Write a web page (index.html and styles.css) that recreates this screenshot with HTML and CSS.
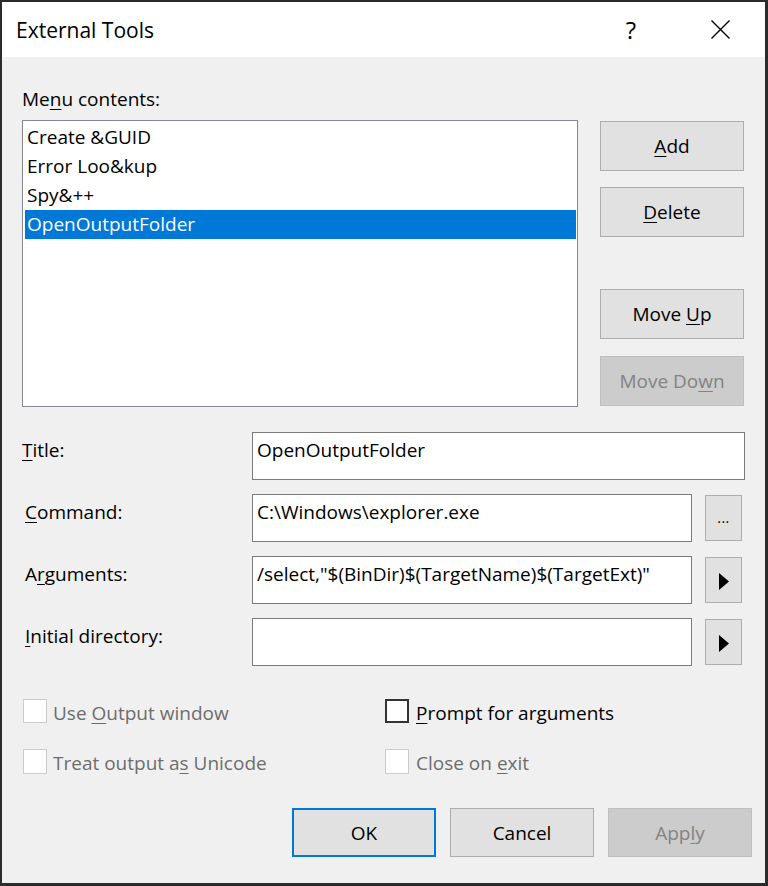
FILE: index.html
```html
<!DOCTYPE html>
<html>
<head>
<meta charset="utf-8">
<title>External Tools</title>
<link rel="stylesheet" href="styles.css">
</head>
<body>
<div class="window">
  <div class="titlebar">
    <span class="title">External Tools</span>
    <span class="tb-help">?</span>
    <span class="tb-close">
      <svg width="19" height="19" viewBox="0 0 19 19"><path d="M0.5 0.5 L18.5 18.5 M18.5 0.5 L0.5 18.5" stroke="#000" stroke-width="1.4" fill="none"/></svg>
    </span>
  </div>
  <div class="content">
    <div class="menu-label">Me<u>n</u>u contents:</div>
    <div class="top-row">
      <div class="list">
        <div class="item">Create &amp;GUID</div>
        <div class="item">Error Loo&amp;kup</div>
        <div class="item">Spy&amp;++</div>
        <div class="item selected">OpenOutputFolder</div>
      </div>
      <div class="side">
        <div class="group">
          <div class="btn"><span><u>A</u>dd</span></div>
          <div class="btn"><span><u>D</u>elete</span></div>
        </div>
        <div class="group group-lower">
          <div class="btn"><span>Move <u>U</u>p</span></div>
          <div class="btn disabled"><span>Move Do<u>w</u>n</span></div>
        </div>
      </div>
    </div>

    <div class="fields">
      <div class="frow">
        <div class="flabel"><u>T</u>itle:</div>
        <div class="tbox wide">OpenOutputFolder</div>
      </div>
      <div class="frow">
        <div class="flabel indent"><u>C</u>ommand:</div>
        <div class="tbox narrow">C:\Windows\explorer.exe</div>
        <div class="mini-btn dots">...</div>
      </div>
      <div class="frow">
        <div class="flabel indent">A<u>r</u>guments:</div>
        <div class="tbox narrow">/select,"$(BinDir)$(TargetName)$(TargetExt)"</div>
        <div class="mini-btn arrow"><svg width="10" height="17" viewBox="0 0 10 17"><polygon points="0,0 10,8.5 0,17" fill="#000"/></svg></div>
      </div>
      <div class="frow">
        <div class="flabel indent"><u>I</u>nitial directory:</div>
        <div class="tbox narrow"></div>
        <div class="mini-btn arrow"><svg width="10" height="17" viewBox="0 0 10 17"><polygon points="0,0 10,8.5 0,17" fill="#000"/></svg></div>
      </div>
    </div>

    <div class="checks">
      <div class="check disabled"><span class="cbox"></span><span class="clabel">Use <u>O</u>utput window</span></div>
      <div class="check col2"><span class="cbox on"></span><span class="clabel"><u>P</u>rompt for arguments</span></div>
      <div class="check disabled"><span class="cbox"></span><span class="clabel">Treat output a<u>s</u> Unicode</span></div>
      <div class="check disabled col2"><span class="cbox"></span><span class="clabel">Close on <u>e</u>xit</span></div>
    </div>

    <div class="footer">
      <div class="btn fbtn default"><span>OK</span></div>
      <div class="btn fbtn"><span>Cancel</span></div>
      <div class="btn fbtn disabled"><span>App<u>l</u>y</span></div>
    </div>
  </div>
</div>
</body>
</html>
```

FILE: styles.css
```css
html, body {
  margin: 0;
  padding: 0;
  background: #2b2b2b;
}
body {
  font-family: "Open Sans", "Noto Sans", sans-serif;
  font-size: 19px;
  color: #000;
}
u {
  text-decoration: underline;
  text-decoration-thickness: 1px;
  text-underline-offset: 3px;
}
.window {
  width: 768px;
  height: 886px;
  box-sizing: border-box;
  border-style: solid;
  border-color: #2b2b2b;
  border-width: 2px 3px 3px 2px;
  background: #f0f0f0;
  display: flex;
  flex-direction: column;
  overflow: hidden;
}
.titlebar {
  height: 55px;
  flex: none;
  background: #fff;
  display: flex;
  align-items: center;
}
.title {
  flex: 1;
  font-size: 21px;
  line-height: 28px;
  padding-left: 14px;
  padding-top: 1px;
}
.tb-help {
  width: 88px;
  text-align: center;
  font-size: 24px;
  line-height: 30px;
}
.tb-close {
  width: 90px;
  display: flex;
  justify-content: center;
  align-items: center;
}
.tb-close svg { display: block; }

.content {
  flex: 1;
  padding: 29px 13px 0 20px;
}
.menu-label {
  line-height: 26px;
}
.top-row {
  display: flex;
  gap: 22px;
  margin-top: 8px;
  width: 722px;
}
.list {
  width: 556px;
  height: 287px;
  box-sizing: border-box;
  border: 1px solid #828790;
  background: #fff;
  padding: 2px 1px 2px 2px;
}
.item {
  height: 29px;
  line-height: 29px;
  padding-left: 2px;
  white-space: nowrap;
}
.item.selected {
  background: #0078d7;
  color: #fff;
}
.side {
  width: 144px;
  padding-top: 1px;
  display: flex;
  flex-direction: column;
}
.group {
  display: flex;
  flex-direction: column;
  gap: 16px;
}
.group-lower {
  margin-top: 52px;
  gap: 17px;
}
.btn {
  height: 50px;
  box-sizing: border-box;
  border: 1px solid #adadad;
  background: #e1e1e1;
  display: flex;
  align-items: center;
  justify-content: center;
  line-height: 26px;
  white-space: nowrap;
}
.btn.disabled {
  background: #cccccc;
  border-color: #bfbfbf;
  color: #838383;
}

.fields {
  margin-top: 25px;
  width: 723px;
  display: flex;
  flex-direction: column;
  gap: 14px;
}
.frow {
  display: flex;
  height: 48px;
}
.flabel {
  width: 230px;
  box-sizing: border-box;
  padding-top: 5px;
  line-height: 26px;
  white-space: nowrap;
}
.flabel.indent {
  padding-left: 3px;
}
.tbox {
  box-sizing: border-box;
  height: 48px;
  border: 1px solid #7a7a7a;
  background: #fff;
  padding: 4px 4px 3px;
  line-height: 26px;
  white-space: nowrap;
  overflow: hidden;
}
.tbox.wide { width: 493px; }
.tbox.narrow { width: 440px; }
.mini-btn {
  width: 37px;
  height: 46px;
  box-sizing: border-box;
  margin-left: 13px;
  margin-top: 1px;
  border: 1px solid #adadad;
  background: #e1e1e1;
  display: flex;
  align-items: center;
  justify-content: center;
}
.mini-btn.dots {
  font-size: 14px;
  line-height: 20px;
  letter-spacing: 0.5px;
}
.mini-btn.arrow svg {
  display: block;
  margin-top: 3px;
}

.checks {
  margin-top: 33px;
  padding-left: 1px;
  display: grid;
  grid-template-columns: 362px 1fr;
  row-gap: 24px;
}
.check {
  display: flex;
  align-items: flex-start;
  height: 26px;
  line-height: 26px;
  white-space: nowrap;
}
.clabel {
  padding-top: 1px;
}
.check.disabled {
  color: #6d6d6d;
}
.cbox {
  width: 24px;
  height: 24px;
  box-sizing: border-box;
  border: 1px solid #cccccc;
  background: #fff;
  margin-right: 6px;
  flex: none;
}
.cbox.on {
  border: 2px solid #333333;
}
.check.col2 .cbox {
  margin-right: 7px;
}
.checks .check:nth-child(n+3) .cbox {
  height: 25px;
}

.footer {
  margin-top: 33px;
  display: flex;
  justify-content: flex-end;
  gap: 14px;
}
.fbtn {
  width: 144px;
  height: 49px;
}
.fbtn.default {
  border: 2px solid #0078d7;
}
```
